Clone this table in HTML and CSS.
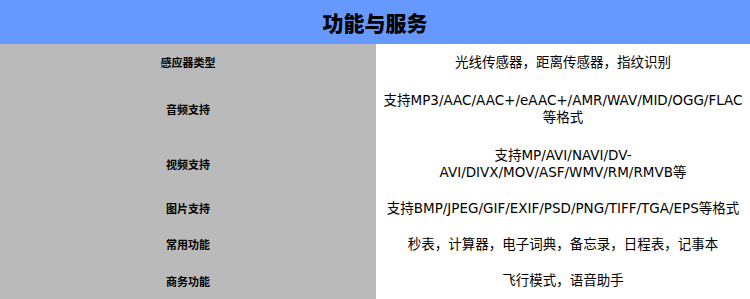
FILE: index.html
```html
<!DOCTYPE html>
<html lang="zh-CN">
<head>
    <meta charset="UTF-8">
    <meta name="viewport" content="width=device-width, initial-scale=1.0">
    <title>功能与服务</title>
    <link rel="stylesheet" href="styles.css">
</head>
<body>
    <div class="specs">
        <h1 class="specs-title">功能与服务</h1>
        <div class="spec-row">
            <div class="spec-name">感应器类型</div>
            <div class="spec-value">光线传感器，距离传感器，指纹识别</div>
        </div>
        <div class="spec-row tall">
            <div class="spec-name">音频支持</div>
            <div class="spec-value">支持MP3/AAC/AAC+/eAAC+/AMR/WAV/MID/OGG/FLAC等格式</div>
        </div>
        <div class="spec-row">
            <div class="spec-name">视频支持</div>
            <div class="spec-value">支持MP/AVI/NAVI/DV-AVI/DIVX/MOV/ASF/WMV/RM/RMVB等</div>
        </div>
        <div class="spec-row">
            <div class="spec-name">图片支持</div>
            <div class="spec-value">支持BMP/JPEG/GIF/EXIF/PSD/PNG/TIFF/TGA/EPS等格式</div>
        </div>
        <div class="spec-row">
            <div class="spec-name">常用功能</div>
            <div class="spec-value">秒表，计算器，电子词典，备忘录，日程表，记事本</div>
        </div>
        <div class="spec-row last">
            <div class="spec-name">商务功能</div>
            <div class="spec-value">飞行模式，语音助手</div>
        </div>
    </div>
</body>
</html>
```

FILE: styles.css
```css
body {
    margin: 0;
    font-family: "DejaVu Sans", "Noto Sans CJK SC", sans-serif;
    color: #000;
    background: #fff;
}

.specs {
    width: 750px;
}

.specs-title {
    margin: 0;
    height: 44px;
    line-height: 44px;
    text-align: center;
    font-family: "Noto Sans CJK SC", sans-serif;
    font-size: 21px;
    font-weight: 900;
    background-color: #6699ff;
}

.spec-row {
    display: grid;
    grid-template-columns: 376px 1fr;
}

.spec-name,
.spec-value {
    display: flex;
    align-items: center;
    justify-content: center;
    text-align: center;
    padding: 9px 4px;
    min-height: 18px;
}

.spec-name {
    background-color: #bababa;
    font-family: "Noto Sans CJK SC", sans-serif;
    font-size: 11px;
    font-weight: bold;
}

.spec-value {
    font-size: 13.5px;
    line-height: 17px;
}

.spec-row.tall .spec-value {
    padding: 12px 4px;
}

.spec-row.last .spec-value {
    padding-bottom: 10px;
}
```
